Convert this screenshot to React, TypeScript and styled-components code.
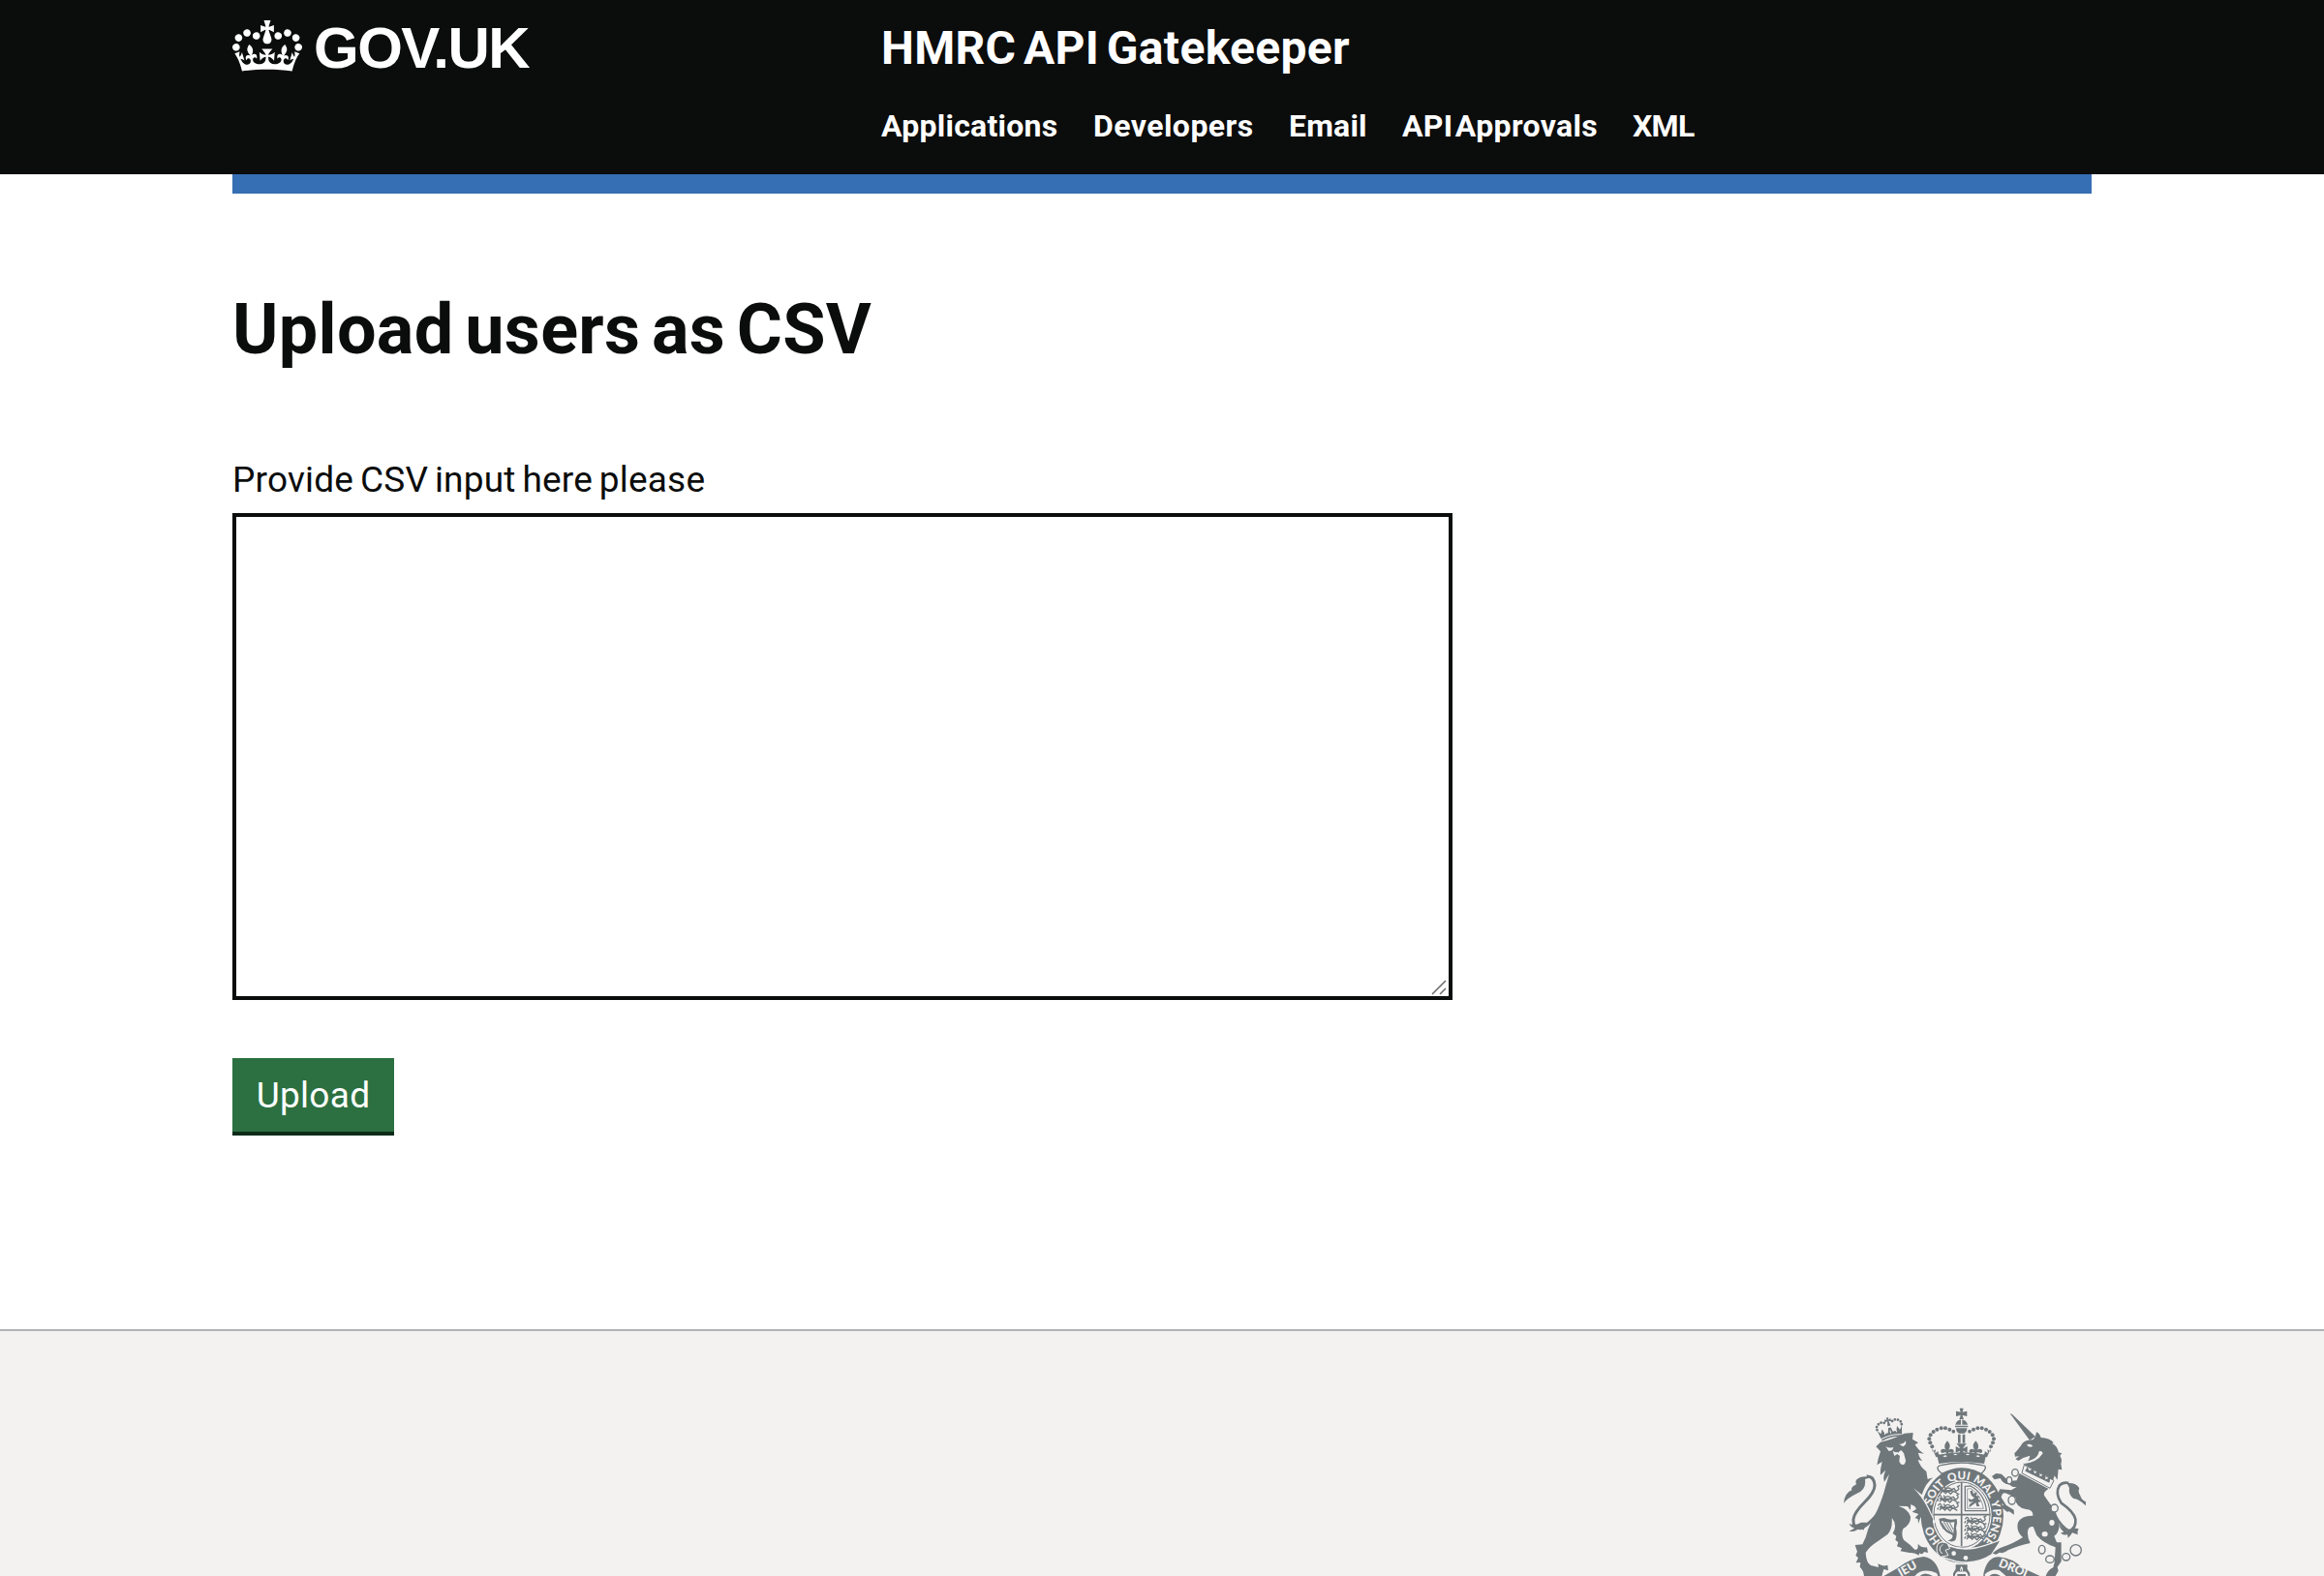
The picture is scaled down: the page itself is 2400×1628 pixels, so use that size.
import React from "react";
import styled, { createGlobalStyle } from "styled-components";

const INK = "#0b0c0c";
const CREST = "#6f777b";
const PAPER = "#f3f2f1";
const FONT = `Roboto, "Noto Sans", sans-serif`;

const GlobalStyle = createGlobalStyle`
  * { box-sizing: border-box; }
  html, body { margin: 0; padding: 0; background: #fff; }
  body { font-family: ${FONT}; color: ${INK}; overflow: hidden; }
`;

const Page = styled.div`
  display: flex;
  flex-direction: column;
  height: 1628px;
  overflow: hidden;
`;

const Container = styled.div`
  width: 1920px;
  margin: 0 auto;
`;

const Header = styled.header`
  height: 180px;
  background: ${INK};
  color: #fff;
`;

const HeaderRow = styled(Container)`
  display: flex;
`;

const LogoLink = styled.a`
  display: flex;
  width: 670px;
  height: 100px;
  padding-top: 21px;
  color: #fff;
`;

const LogoText = styled.span`
  margin: -6px 0 0 12px;
  font: 700 60px/70px "Liberation Sans", sans-serif;
  letter-spacing: -1.5px;
  white-space: nowrap;
`;

const HeaderContent = styled.div`
  display: flex;
  flex-direction: column;
  padding-top: 20px;
`;

const ServiceName = styled.a`
  font: 700 48px/60px ${FONT};
  letter-spacing: 0.3px;
  word-spacing: -4.5px;
  color: #fff;
  white-space: nowrap;
`;

const Nav = styled.nav`
  display: flex;
  margin-top: 30px;
`;

const NavLink = styled.a<{ $width: number; $spacing: number }>`
  width: ${(p) => p.$width}px;
  font: 700 32px/40px ${FONT};
  letter-spacing: ${(p) => p.$spacing}px;
  word-spacing: -6px;
  color: #fff;
  white-space: nowrap;
`;

const BlueBar = styled(Container)`
  height: 20px;
  background: #366fb3;
`;

const Main = styled(Container)`
  flex: none;
  height: 1173px;
  display: flex;
  flex-direction: column;
  align-items: flex-start;
`;

const Title = styled.h1`
  margin: 101px 0 0;
  font: 700 72px/80px ${FONT};
  letter-spacing: 0.3px;
  word-spacing: -6.5px;
  white-space: nowrap;
`;

const Label = styled.label`
  margin-top: 90px;
  font: 400 37px/50px ${FONT};
  letter-spacing: 0.2px;
  word-spacing: -2.6px;
  white-space: nowrap;
`;

const CsvInput = styled.textarea`
  display: block;
  width: 1260px;
  height: 503px;
  margin: 9px 0 0;
  padding: 10px;
  border: 4px solid ${INK};
  border-radius: 0;
  background: #fff;
  font: 400 38px/50px ${FONT};
  resize: none;
  outline: none;
`;

const InputWrap = styled.div`
  position: relative;
`;

const Grip = styled.svg`
  position: absolute;
  right: 5px;
  bottom: 4px;
`;

const UploadButton = styled.button`
  width: 167px;
  height: 80px;
  margin: 60px 0 0;
  padding: 2px 0 0;
  border: 0;
  border-bottom: 4px solid #0c2b1a;
  border-radius: 0;
  background: #2c7041;
  color: #fff;
  font: 400 37px/50px ${FONT};
  letter-spacing: 0.3px;
`;

const Footer = styled.footer`
  height: 255px;
  border-top: 2px solid #b1b4b6;
  background: ${PAPER};
`;

const FooterRow = styled(Container)`
  display: flex;
  justify-content: flex-end;
  padding: 65px 0 0;

  svg {
    margin-right: -10px;
  }
`;

function Crown() {
  return (
    <svg width="72" height="53" viewBox="0 0 132 97" fill="#fff">
      <path
        fillRule="evenodd"
        d="M25 30.2c3.5 1.5 7.7-.2 9.1-3.7 1.5-3.6-.2-7.8-3.9-9.2-3.6-1.4-7.6.3-9.1 3.9-1.4 3.5.3 7.5 3.9 9zM9 39.5c3.6 1.5 7.8-.2 9.2-3.7 1.5-3.6-.2-7.8-3.9-9.1-3.6-1.5-7.6.2-9.1 3.8-1.4 3.5.3 7.5 3.8 9zM4.4 57.2c3.5 1.5 7.7-.2 9.1-3.8 1.5-3.6-.2-7.7-3.9-9.1-3.5-1.5-7.6.3-9.1 3.8-1.4 3.5.3 7.6 3.9 9.1zm38.3-21.4c3.5 1.5 7.7-.2 9.1-3.8 1.5-3.6-.2-7.7-3.9-9.1-3.6-1.5-7.6.3-9.1 3.8-1.3 3.6.4 7.7 3.9 9.1zm64.4-5.6c-3.6 1.5-7.8-.2-9.1-3.7-1.5-3.6.2-7.8 3.8-9.2 3.6-1.4 7.7.3 9.2 3.9 1.3 3.5-.4 7.5-3.9 9zm15.9 9.3c-3.6 1.5-7.7-.2-9.1-3.7-1.5-3.6.2-7.8 3.7-9.1 3.6-1.5 7.7.2 9.2 3.8 1.5 3.5-.3 7.5-3.8 9zm4.7 17.7c-3.6 1.5-7.8-.2-9.2-3.8-1.5-3.6.2-7.7 3.9-9.1 3.6-1.5 7.7.3 9.2 3.8 1.3 3.5-.4 7.6-3.9 9.1zM89.3 35.8c-3.6 1.5-7.8-.2-9.2-3.8-1.4-3.6.2-7.7 3.9-9.1 3.6-1.5 7.7.3 9.2 3.8 1.4 3.6-.3 7.7-3.9 9.1zM69.7 17.7l8.9 4.7V9.3l-8.9 2.8c-.2-.3-.5-.6-.9-.9L72.4 0H59.6l3.5 11.2c-.3.3-.6.5-.9.9l-8.8-2.8v13.1l8.8-4.7c.3.3.6.7.9.9l-5 15.4v.1c-.2.8-.4 1.6-.4 2.4 0 4.1 3.1 7.5 7 8.1h.2c.3 0 .7.1 1 .1.4 0 .7 0 1-.1h.2c4-.6 7.1-4.1 7.1-8.1 0-.8-.1-1.7-.4-2.4V34l-5.1-15.4c.4-.2.7-.6 1-.9zM66 92.8c16.9 0 32.8 1.1 47.1 3.2 4-16.9 8.9-26.7 14-33.5l-9.6-3.4c1 4.9 1.1 7.2 0 10.2-1.5-1.4-3-4.3-4.2-8.7L108.6 76c2.8-2 5-3.2 7.5-3.3-4.4 9.4-10 11.9-13.6 11.2-4.3-.8-6.3-4.6-5.6-7.9 1-4.7 5.7-5.9 8-.5 4.3-8.7-3-11.4-7.6-8.8 7.1-7.2 7.9-13.5 2.1-21.1-8 6.1-8.1 12.3-4.5 20.8-4.7-5.4-12.1-2.5-9.5 6.2 3.4-5.2 7.9-2 7.2 3.1-.6 4.3-6.4 7.8-13.5 7.2-10.3-.9-10.9-8-11.2-13.8 2.5-.5 7.1 1.8 11 7.3L80.2 60c-4.1 4.4-8 5.3-12.3 5.4 1.4-4.4 8-11.6 8-11.6H55.5s6.4 7.2 7.9 11.6c-4.2-.1-8-1-12.3-5.4l1.4 16.4c3.9-5.5 8.5-7.7 10.9-7.3-.3 5.8-.9 12.8-11.1 13.8-7.2.6-12.9-2.9-13.5-7.2-.7-5 3.8-8.3 7.1-3.1 2.7-8.7-4.6-11.6-9.4-6.2 3.7-8.5 3.6-14.7-4.6-20.8-5.8 7.6-5 13.9 2.2 21.1-4.7-2.6-11.9.1-7.7 8.8 2.3-5.5 7.1-4.2 8.1.5.7 3.3-1.3 7.1-5.7 7.9-3.5.7-9-1.8-13.5-11.2 2.5.1 4.7 1.3 7.5 3.3l-4.7-15.4c-1.2 4.4-2.7 7.2-4.3 8.7-1.1-3-.9-5.3 0-10.2l-9.5 3.4c5 6.9 9.9 16.7 14 33.5 14.8-2.1 30.8-3.2 47.7-3.2z"
      />
    </svg>
  );
}

const ARCH: [number, number][] = [
  [37, 86], [50, 82], [63, 82], [76, 86], [87, 93], [96, 103], [100, 115], [97, 127], [91, 139],
];

const MOTTO: [string, number][] = [
  ["HO", 102], ["SOIT", 231], ["QUI", 316], ["MAL", 397], ["Y", 456], ["PENSE", 523],
];

const LIONS: [number, number][] = [
  [338, 292], [336, 318], [336, 344], [420, 386], [420, 410], [420, 434],
];

function Lion() {
  return (
    <g>
      <path d="M142 163L156 149Q192 141 230 122L257 120L255 140L273 151L263 157Q274 176 291 185L273 182Q275 197 286 207L272 204Q278 225 298 240L302 264L319 259Q296 276 284 312L258 292Q284 318 300 350L319 388L315 402L305 392L297 402L292 390L284 398L281 380L273 402L272 388L263 384L274 372L254 365L267 356L262 348L250 342L249 360L240 348L212 347Q244 358 249 380Q251 402 226 418Q219 436 228 452Q248 466 262 482Q274 486 272 464Q284 478 300 475L303 492L291 489Q286 500 276 493L275 500Q262 490 246 492L218 487L222 478L207 472L211 460L202 452L205 440L194 432Q210 405 191 384Q194 418 178 435L145 458Q122 472 110 492Q112 524 126 531L150 537L148 526Q164 536 178 530L180 547L166 543L160 564H105Q103 545 92 536L94 522L80 523L87 508L79 500L84 488L77 468L100 466Q112 444 118 418Q128 392 146 360Q164 318 172 285L183 248L168 272Q162 258 172 236L156 251Q154 238 161 210L145 220Q148 200 156 178Z" />
      <path d="M147 372Q112 412 94 416Q70 418 72 388Q74 368 106 336Q139 303 138 282Q136 254 113 255" fill="none" stroke={CREST} strokeWidth="9" />
      <path d="M128 258Q96 251 81 266Q77 275 82 279Q60 292 68 297Q45 306 42 338Q54 322 83 308Q113 296 108 264Z" />
      <path d="M58 402Q76 410 96 398L118 398Q106 411 103 422L91 413Q78 430 59 425L75 416Q64 413 58 402Z" />
      <path d="M172 162Q184 170 196 164Q194 178 181 176ZM214 155Q228 156 234 145Q238 158 225 163ZM194 176Q207 186 220 174L228 183L232 198Q237 211 229 218Q218 222 214 208L216 192L208 186L199 192Z" fill={PAPER} />
      <path d="M205 173L216 170L211 183Z" />
      <g transform="rotate(-13 187 118)">
        <path d="M154 132Q187 122 220 132L226 106L217 117L211 104L205 119L200 117L195 119L191 104H183L179 119H169L163 104L157 117L148 106Z" />
        <path d="M155 137Q187 127 219 137" fill="none" stroke={CREST} strokeWidth="5" />
        {[[148, 102], [149, 93], [156, 86], [165, 83], [174, 86], [200, 86], [209, 83], [218, 86], [225, 93], [226, 102]].map(([x, y]) => (
          <circle key={x + y * 1000} cx={x} cy={y} r="4.2" />
        ))}
        <path d="M183 72H191L189 79L197 76V86L189 83L192 98H182L185 83L177 86V76L185 79Z" />
        <path d="M168 122L170 115M187 122V113M206 122L204 115" stroke={PAPER} strokeWidth="3" />
      </g>
    </g>
  );
}

function Unicorn() {
  return (
    <g transform="translate(390 0)">
      <path d="M167 60L174 63L246 132L228 143Z" />
      <path d="M181 184Q199 164 206 152Q218 142 238 142Q246 136 249 118Q259 122 263 135Q290 136 302 151L298 154Q313 160 318 181L328 184L322 191Q330 205 325 216L328 235L317 233L314 266L305 253L300 269Q284 252 260 246L222 224L207 216Q226 213 229 191L208 198L193 207L184 201L196 193L183 194Z" />
      <path d="M219 158Q229 151 238 161Q228 168 219 158ZM206 217Q250 214 269 184Q266 175 257 178Q255 196 236 203Q220 207 206 217Z" fill={PAPER} />
      <path d="M211 220L303 268L291 292L204 245Z" fill={PAPER} stroke={CREST} strokeWidth="3" />
      <path d="M214 238L221 226L227 238L235 233L238 222L243 247L250 242L257 231L260 256L269 251L276 241L277 265L285 262L294 255L289 275L216 240Z" />
      <path d="M196 246L287 294Q268 304 274 316Q289 340 306 356L320 407Q319 430 304 440L312 460H326V519L314 536L317 548L308 564H278Q286 543 301 538L305 522L308 475Q270 462 250 438L239 411Q222 410 222 428Q221 446 230 462Q190 471 161 484Q147 496 135 491L124 497L113 494Q126 480 147 473Q176 464 207 444Q185 426 192 398Q203 376 238 377Q240 359 217 357Q183 351 184 320L158 309Q144 301 140 320L155 344L179 359L180 374L165 364L158 365L141 351L147 343L129 327L125 317L136 295L171 298L188 288Q171 290 165 279Q148 282 137 261L119 265L111 255L124 246L141 248L163 270L188 268Z" />
      <path d="M306 374Q325 412 350 424Q373 416 370 388Q364 364 326 338Q306 306 320 284Q331 272 349 276" fill="none" stroke={CREST} strokeWidth="8" />
      <path d="M343 276Q373 274 382 292Q377 302 384 313Q389 329 402 334V346Q380 325 364 324Q347 311 351 291Z" />
      <path d="M318 404L346 426Q366 412 380 418Q374 427 377 436L360 430Q352 443 347 446L345 435Q332 440 324 430L334 428Q322 418 318 404Z" />
      <g fill="none" stroke={CREST} strokeWidth="4">
        <ellipse cx="183" cy="244" rx="10" ry="11" />
        <ellipse cx="165" cy="268" rx="8" ry="11" fill={PAPER} />
        <ellipse cx="173" cy="329" rx="11" ry="13" />
        <ellipse cx="305" cy="354" rx="11" ry="12" fill={PAPER} />
        <ellipse cx="266" cy="482" rx="10" ry="13" />
        <ellipse cx="291" cy="512" rx="13" ry="11" />
        <ellipse cx="341" cy="505" rx="12" ry="11" />
        <circle cx="371" cy="484" r="17" />
      </g>
      <ellipse cx="297" cy="399" rx="8" ry="9" fill={PAPER} />
      <ellipse cx="275" cy="434" rx="9" ry="8" fill={PAPER} />
    </g>
  );
}

function RoyalCrown() {
  return (
    <g transform="translate(407 24)">
      <path d="M-6 20H6Q4 28 3 32Q8 31 17 29V45Q9 43 3 41Q4 48 7 54H-7Q-4 48 -3 41Q-9 43 -17 45V29Q-8 31 -3 32Q-4 28 -6 20Z" />
      <path d="M-2 55V71H-19Q-15 58 -2 55ZM2 55Q15 58 19 71H2ZM-20 74H20V79H-20ZM-17 82H17Q17 94 8 98H-8Q-17 94 -17 82Z" />
      <path d="M-11 101H-3V128H-11ZM3 101H11V128H3ZM-16 130L16 130Q6 140 5 145L18 138V158L5 152Q5 158 10 168H-10Q-5 158 -5 152L-18 158V138L-5 145Q-6 140 -16 130Z" />
      {ARCH.map(([x, y]) => (
        <g key={x}>
          <circle cx={-x} cy={y} r="6" />
          <circle cx={x} cy={y} r="6" />
        </g>
      ))}
      <circle cx="-25" cy="92" r="5.5" />
      <circle cx="25" cy="92" r="5.5" />
      {[-1, 1].map((s) => (
        <g key={s} transform={`scale(${s} 1)`}>
          <path d="M44 121Q59 138 48 149Q58 143 64 150Q66 158 59 159Q52 155 46 158L48 168H39L41 158Q35 155 29 159Q21 156 25 149Q32 143 40 149Q30 136 44 121Z" />
          <path d="M91 143L79 172L64 168Q74 162 72 153L82 160L80 147L90 155Z" />
        </g>
      ))}
      <path d="M-76 165Q0 148 76 165L70 192Q0 180 -70 192Z" />
      <path d="M-58 169l7 -3l7 2l-7 4zM-26 164l7 -3l7 2l-7 3zM12 163l7 -2l7 3l-7 2zM44 168l7 -2l7 3l-7 3z" fill={PAPER} />
      <path d="M-64 197Q0 181 64 197Q80 197 71 212L61 223Q0 190 -61 223L-72 212Q-78 199 -64 197Z" fill={PAPER} stroke={CREST} strokeWidth="4" />
    </g>
  );
}

function Shield() {
  return (
    <g>
      <ellipse cx="409" cy="376" rx="128" ry="148" />
      <ellipse cx="408" cy="375" rx="92" ry="107" fill={PAPER} />
      <ellipse cx="408" cy="374" rx="87" ry="101" fill={PAPER} stroke={CREST} strokeWidth="3" />
      <path d="M407 273V472M320 374H496" stroke={CREST} strokeWidth="5" fill="none" />
      {LIONS.map(([x, y]) => (
        <g key={`${x}-${y}`} transform={`translate(${x} ${y})`} fill="none" stroke={CREST} strokeWidth="4">
          <path d="M-2 2Q6 -10 9 2Q12 12 20 4Q28 -6 38 4L46 1L52 10M3 16L10 8L20 16L26 9L35 18L44 9L58 17M52 9Q66 4 57 -5L64 -9M20 4L16 -4M0 8L-4 14" />
          <path d="M3 5L14 9L42 7" strokeWidth="6" />
        </g>
      ))}
      <path d="M418 286V362H484Q480 310 435 285Z" fill="none" stroke={CREST} strokeWidth="4" />
      <path d="M425 294V355H475Q469 315 436 293Z" fill="none" stroke={CREST} strokeWidth="2" />
      <path d="M433 302L440 298L444 309L455 303L452 315L464 318L458 324L468 333L458 336L463 348L454 348L451 337L441 344L430 352L432 342L443 333L432 335L427 323L438 328L447 322L438 315Z" />
      <path d="M337 386L353 384Q371 392 392 387Q396 400 390 415Q395 438 388 453Q378 461 364 454Q382 449 379 437Q341 423 337 386Z" />
      <path d="M344 393Q370 401 385 396L382 431Q350 421 344 393Z" fill={PAPER} />
      <path d="M352 396L374 431M361 398L379 429M370 398L382 421M347 400L363 426" stroke={CREST} strokeWidth="3" />
      <path id="motto-ring" d="M408 485A97 110 0 0 1 408 265A97 110 0 0 1 408 485" fill="none" />
      {MOTTO.map(([word, offset]) => (
        <text key={word} fontFamily="Lato, sans-serif" fontWeight="900" fontSize="35" fill={PAPER} textAnchor="middle">
          <textPath href="#motto-ring" startOffset={offset}>{word}</textPath>
        </text>
      ))}
      <path d="M336 462L352 456L365 470Q420 490 478 470L530 452L500 498Q450 530 390 519L348 506Q328 492 336 462Z" stroke={PAPER} strokeWidth="4" />
      <path d="M342 505Q324 490 333 466Q344 454 363 463L371 479L357 484L366 500Z" stroke={PAPER} strokeWidth="3" />
      <path d="M349 466Q331 480 347 495" fill="none" stroke={PAPER} strokeWidth="3" />
      <circle cx="383" cy="494" r="7" fill={PAPER} />
      <circle cx="420" cy="508" r="7" fill={PAPER} />
    </g>
  );
}

function Banners() {
  return (
    <g>
      <path d="M166 564L208 540Q248 509 290 504Q331 510 341 564Z" />
      <path d="M262 564Q286 537 330 555L334 564Z" fill={PAPER} />
      <path d="M278 564Q292 549 318 564Z" />
      <path d="M475 557Q487 504 523 505Q566 509 594 538L650 564H475Z" />
      <path d="M479 559Q500 539 524 546L545 564H480Z" fill={PAPER} />
      <path d="M493 564Q508 551 528 564Z" />
      <g fontFamily="Lato, sans-serif" fontWeight="900" fontSize="37" fill={PAPER}>
        <text transform="translate(219 567) rotate(-29)">IEU</text>
        <text transform="translate(520 533) rotate(22)">DROI</text>
      </g>
      <path d="M389 529H425V542L433 556V564H381V556L389 542Z" />
      <path d="M407 533Q415 543 409 551Q424 545 428 564H386Q390 545 405 551Q399 543 407 533Z" fill={PAPER} />
      <path d="M407 540Q411 546 407 553Q403 546 407 540ZM394 558H420V564H394Z" />
    </g>
  );
}

function RoyalArms() {
  return (
    <svg width="280" height="188" viewBox="0 0 840 564" fill={CREST}>
      <Shield />
      <RoyalCrown />
      <path d="M255 288Q285 316 304 354L324 400" fill="none" stroke={PAPER} strokeWidth="5" />
      <Lion />
      <Unicorn />
      <Banners />
    </svg>
  );
}

const NAV: { label: string; width: number; spacing: number }[] = [
  { label: "Applications", width: 219, spacing: 0.25 },
  { label: "Developers", width: 202, spacing: 0.45 },
  { label: "Email", width: 117, spacing: 0.2 },
  { label: "API Approvals", width: 238, spacing: 0.35 },
  { label: "XML", width: 70, spacing: -0.7 },
];

export default function App() {
  return (
    <Page>
      <GlobalStyle />
      <Header>
        <HeaderRow>
          <LogoLink>
            <Crown />
            <LogoText>GOV.UK</LogoText>
          </LogoLink>
          <HeaderContent>
            <ServiceName>HMRC API Gatekeeper</ServiceName>
            <Nav>
              {NAV.map((n) => (
                <NavLink key={n.label} $width={n.width} $spacing={n.spacing}>
                  {n.label}
                </NavLink>
              ))}
            </Nav>
          </HeaderContent>
        </HeaderRow>
      </Header>
      <BlueBar />
      <Main as="main">
        <Title>Upload users as CSV</Title>
        <Label htmlFor="csv">Provide CSV input here please</Label>
        <InputWrap>
          <CsvInput id="csv" />
          <Grip width="17" height="17" viewBox="0 0 17 17" fill="none" stroke="#6b6b6b" strokeWidth="1.5">
            <path d="M1 15L15 1M9 15L15 9" />
          </Grip>
        </InputWrap>
        <UploadButton>Upload</UploadButton>
      </Main>
      <Footer>
        <FooterRow>
          <RoyalArms />
        </FooterRow>
      </Footer>
    </Page>
  );
}
